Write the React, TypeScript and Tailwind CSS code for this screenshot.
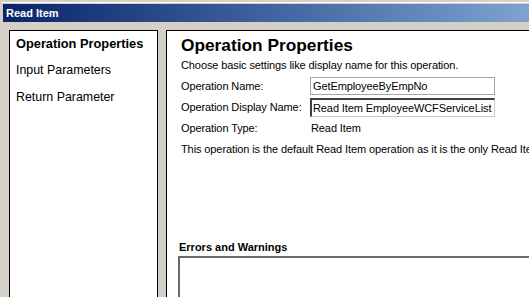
import React from 'react';

const navItems = ['Operation Properties', 'Input Parameters', 'Return Parameter'];

export default function App() {
  return (
    <div
      className="w-[529px] h-[297px] overflow-hidden bg-[#d4d0c8] flex flex-col text-black"
      style={{ fontFamily: '"Liberation Sans", Arial, sans-serif' }}
    >
      {/* window frame top */}
      <div className="h-[2px] shrink-0 bg-[#d4d0c8]" />
      <div className="h-px shrink-0 bg-white ml-[2px]" />
      <div className="h-px shrink-0 bg-[#d4d0c8]" />

      {/* title bar */}
      <div className="h-[18px] shrink-0 ml-[3px] flex items-center pl-[3px] bg-gradient-to-r from-[#0a246a] to-[#7fa2d2]">
        <span className="text-white font-bold text-[11px] leading-none">Read Item</span>
      </div>

      {/* body */}
      <div className="flex-1 flex gap-[8px] pl-[9px] pt-[8px] min-h-0">
        {/* nav */}
        <div className="w-[149px] shrink-0 bg-white border border-black border-b-0 pl-[6px]">
          {navItems.map((item, i) => (
            <div
              key={item}
              className={`h-[27px] leading-[25px] ${i === 0 ? 'font-bold text-[12.8px]' : 'text-[12.4px]'}`}
            >
              {item}
            </div>
          ))}
        </div>

        {/* main panel */}
        <div className="flex-1 min-w-0 bg-white border-l border-t border-black pl-[14px] flex flex-col whitespace-nowrap overflow-hidden">
          <h2 className="mt-[3px] leading-[22px] text-[17.3px] font-bold">Operation Properties</h2>
          <p className="mt-[2px] leading-[14px] text-[11px] tracking-[-0.1px]">
            Choose basic settings like display name for this operation.
          </p>

          <div className="mt-[5px] flex items-center h-[18px] text-[11px] tracking-[-0.1px]">
            <span className="w-[129px] shrink-0">Operation Name:</span>
            <div className="w-[185px] h-[18px] border border-[#a5a5a5] flex items-center pl-[2px]">
              GetEmployeeByEmpNo
            </div>
          </div>

          <div className="mt-[3px] flex items-center h-[19px] text-[11px] tracking-[-0.1px]">
            <span className="w-[129px] shrink-0">Operation Display Name:</span>
            <div className="w-[185px] h-[19px] border-t-2 border-l-2 border-t-[#404040] border-l-[#404040] border-r border-b border-r-[#c8c8c8] border-b-[#c8c8c8] flex items-center pl-[1px]">
              Read Item EmployeeWCFServiceList
            </div>
          </div>

          <div className="mt-[3px] flex items-center h-[16px] text-[11px] tracking-[-0.1px]">
            <span className="w-[130px] shrink-0">Operation Type:</span>
            <span>Read Item</span>
          </div>

          <p className="mt-[6px] leading-[14px] text-[11px] tracking-[-0.1px]">
            This operation is the default Read Item operation as it is the only Read Item operation in the entity.
          </p>

          <h3 className="mt-[84px] -ml-[2px] leading-[14px] text-[11px] font-bold">Errors and Warnings</h3>
          <div className="mt-[2px] -ml-[3px] flex-1 border-t-2 border-l-2 border-[#6a6a6a] bg-white" />
        </div>
      </div>
    </div>
  );
}
